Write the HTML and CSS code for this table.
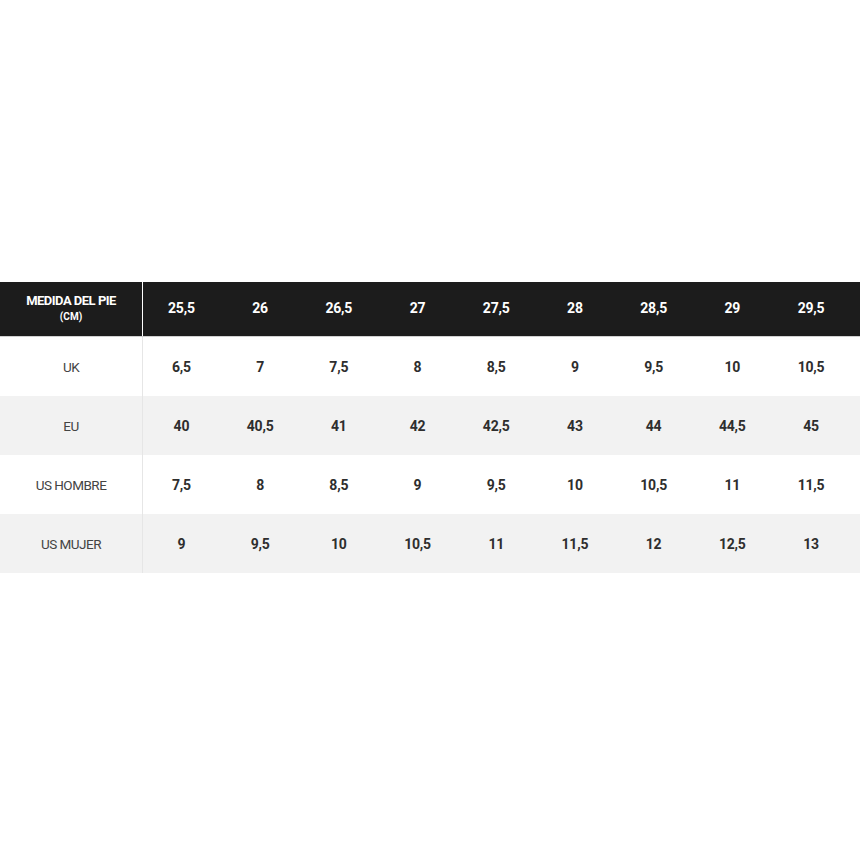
FILE: index.html
```html
<!DOCTYPE html>
<html lang="es">
<head>
<meta charset="utf-8">
<title>Tabla de tallas</title>
<link rel="stylesheet" href="styles.css">
</head>
<body>
<div class="page">
  <div class="chart">
    <div class="row head">
      <div class="label"><span class="main">MEDIDA DEL PIE</span><span class="unit">(CM)</span></div>
      <div class="cell">25,5</div><div class="cell">26</div><div class="cell">26,5</div><div class="cell">27</div><div class="cell">27,5</div><div class="cell">28</div><div class="cell">28,5</div><div class="cell">29</div><div class="cell">29,5</div><div class="fill"></div>
    </div>
    <div class="row">
      <div class="label">UK</div>
      <div class="cell">6,5</div><div class="cell">7</div><div class="cell">7,5</div><div class="cell">8</div><div class="cell">8,5</div><div class="cell">9</div><div class="cell">9,5</div><div class="cell">10</div><div class="cell">10,5</div><div class="fill"></div>
    </div>
    <div class="row alt">
      <div class="label">EU</div>
      <div class="cell">40</div><div class="cell">40,5</div><div class="cell">41</div><div class="cell">42</div><div class="cell">42,5</div><div class="cell">43</div><div class="cell">44</div><div class="cell">44,5</div><div class="cell">45</div><div class="fill"></div>
    </div>
    <div class="row">
      <div class="label">US HOMBRE</div>
      <div class="cell">7,5</div><div class="cell">8</div><div class="cell">8,5</div><div class="cell">9</div><div class="cell">9,5</div><div class="cell">10</div><div class="cell">10,5</div><div class="cell">11</div><div class="cell">11,5</div><div class="fill"></div>
    </div>
    <div class="row alt">
      <div class="label">US MUJER</div>
      <div class="cell">9</div><div class="cell">9,5</div><div class="cell">10</div><div class="cell">10,5</div><div class="cell">11</div><div class="cell">11,5</div><div class="cell">12</div><div class="cell">12,5</div><div class="cell">13</div><div class="fill"></div>
    </div>
  </div>
</div>
</body>
</html>
```

FILE: styles.css
```css
html, body {
  margin: 0;
  padding: 0;
  background: #ffffff;
}
body {
  font-family: Roboto, "Liberation Sans", sans-serif;
  color: #333333;
}
.page {
  width: 860px;
  height: 860px;
  padding-top: 282px;
  box-sizing: border-box;
}
.chart {
  display: flex;
  flex-direction: column;
  width: 860px;
}
.row {
  display: flex;
  height: 59px;
  background: #ffffff;
}
.row.alt {
  background: #f2f2f2;
}
.row.head {
  height: 54px;
  background: #1c1c1c;
  color: #ffffff;
  border-bottom: 1px solid #d0d0d0;
}
.label {
  width: 143px;
  flex: none;
  box-sizing: border-box;
  border-right: 1px solid #e6e6e6;
  display: flex;
  flex-direction: column;
  align-items: center;
  justify-content: center;
  font-size: 13.5px;
  color: #444444;
  letter-spacing: -0.5px;
}
.head .label {
  border-right: 1px solid #ffffff;
  color: #ffffff;
  padding-bottom: 3px;
}
.head .main {
  font-weight: 700;
  font-size: 13px;
  letter-spacing: -0.5px;
}
.head .unit {
  font-weight: 700;
  font-size: 10px;
  margin-top: 3px;
  letter-spacing: 0;
}
.cell {
  width: 78.8px;
  flex: none;
  display: flex;
  align-items: center;
  justify-content: center;
  font-weight: 700;
  font-size: 14px;
  letter-spacing: -0.2px;
  color: #2e2e2e;
  margin-left: -0.1px;
}
.row .cell:nth-child(2) {
  margin-left: -1px;
}
.head .cell {
  color: #ffffff;
  padding-bottom: 3px;
}
.fill {
  flex: 1;
}
```
